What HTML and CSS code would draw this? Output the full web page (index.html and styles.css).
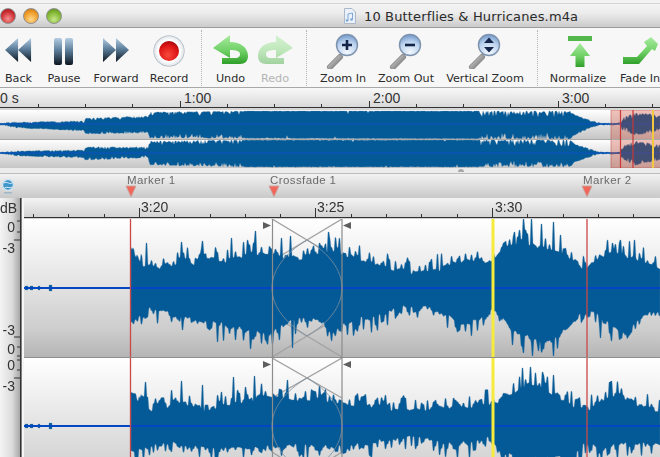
FILE: index.html
```html
<!DOCTYPE html>
<html lang="en">
<head>
<meta charset="utf-8">
<title>10 Butterflies &amp; Hurricanes.m4a</title>
<link rel="stylesheet" href="styles.css">
</head>
<body>
<svg class="defs" width="0" height="0" aria-hidden="true">
  <defs>
    <linearGradient id="steel" x1="0" y1="0" x2="0" y2="1">
      <stop offset="0" stop-color="#b4cde2"/><stop offset=".45" stop-color="#5d7f9c"/><stop offset="1" stop-color="#0c1620"/>
    </linearGradient>
    <linearGradient id="green" x1="0" y1="0" x2="0" y2="1">
      <stop offset="0" stop-color="#a8eba0"/><stop offset=".55" stop-color="#6fd065"/><stop offset="1" stop-color="#2f9f2a"/>
    </linearGradient>
    <linearGradient id="handle" x1="0" y1="0" x2="1" y2="1">
      <stop offset="0" stop-color="#d8d8d8"/><stop offset="1" stop-color="#6a6a6a"/>
    </linearGradient>
    <radialGradient id="lens" cx=".5" cy=".85" r=".85">
      <stop offset="0" stop-color="#f2f7fd"/><stop offset=".6" stop-color="#bcd3ee"/><stop offset="1" stop-color="#6f97cc"/>
    </radialGradient>
    <radialGradient id="red" cx=".45" cy=".7" r=".7">
      <stop offset="0" stop-color="#f84a3c"/><stop offset=".7" stop-color="#dd1414"/><stop offset="1" stop-color="#a40c0c"/>
    </radialGradient>
    <radialGradient id="ring" cx=".5" cy=".5" r=".5">
      <stop offset=".7" stop-color="#ffffff"/><stop offset=".93" stop-color="#e4e8ec"/><stop offset="1" stop-color="#98a4b0"/>
    </radialGradient>
    <symbol id="glass" viewBox="0 0 36 36">
      <path d="M15 24 5 34" class="glass-shadow"/>
      <path d="M15 24 5 34" class="glass-handle"/>
      <circle cx="22" cy="12" r="10.5" class="glass-lens"/>
    </symbol>
  </defs>
</svg>

<div class="app">
  <div class="topstrip"></div>

  <header class="titlebar">
    <div class="lights">
      <span class="light light-red"></span>
      <span class="light light-amber"></span>
      <span class="light light-green"></span>
    </div>
    <div class="title">
      <svg class="doc" viewBox="0 0 12 16" width="12" height="16" aria-hidden="true">
        <path d="M.5.5H8L11.5 4V15.5H.5Z" class="doc-page"/>
        <path d="M4 12.5V6L8.5 5V11.5" class="doc-note"/>
        <circle cx="3" cy="12.5" r="1.3" class="doc-dot"/><circle cx="7.5" cy="11.5" r="1.3" class="doc-dot"/>
      </svg>
      <span>10 Butterflies &amp; Hurricanes.m4a</span>
    </div>
  </header>

  <nav class="toolbar">
    <div class="tool tool-back">
      <svg class="icon" viewBox="0 0 30 28" width="28" height="26" aria-hidden="true"><path d="M0 14 14 1V27ZM14 14 28 1V27Z" class="fill-steel"/></svg>
      <span>Back</span>
    </div>
    <div class="tool tool-pause">
      <svg class="icon" viewBox="0 0 20 28" width="20" height="28" aria-hidden="true"><rect x="0" y="1" width="8" height="27" rx="2" class="fill-steel"/><rect x="11" y="1" width="8" height="27" rx="2" class="fill-steel"/></svg>
      <span>Pause</span>
    </div>
    <div class="tool tool-forward">
      <svg class="icon" viewBox="0 0 30 28" width="28" height="26" aria-hidden="true"><path d="M1 1 15 14 1 27ZM15 1 29 14 15 27Z" class="fill-steel"/></svg>
      <span>Forward</span>
    </div>
    <div class="tool tool-record">
      <svg class="icon" viewBox="0 0 32 32" width="32" height="32" aria-hidden="true"><circle cx="16" cy="16" r="15.5" fill="url(#ring)"/><circle cx="16" cy="16" r="10" fill="url(#red)"/></svg>
      <span>Record</span>
    </div>
    <i class="sep sep-a"></i>
    <div class="tool tool-undo">
      <svg class="icon" viewBox="0 0 35 30" width="35" height="30" aria-hidden="true"><path d="M0 13 17 0V7C28 7 35 13 35 21 35 26 32 29 27 29H9V23H22C26 23 27 21 27 19 27 16 23 15 17 15V23Z" fill="url(#green)"/></svg>
      <span>Undo</span>
    </div>
    <div class="tool tool-redo">
      <svg class="icon icon-off" viewBox="0 0 35 30" width="35" height="30" aria-hidden="true"><path d="M35 13 18 0V7C7 7 0 13 0 21 0 26 3 29 8 29H26V23H13C9 23 8 21 8 19 8 16 12 15 18 15V23Z" fill="url(#green)"/></svg>
      <span>Redo</span>
    </div>
    <i class="sep sep-b"></i>
    <div class="tool tool-in">
      <svg class="icon" viewBox="0 0 36 36" width="36" height="36" aria-hidden="true"><use href="#glass"/><path d="M22 7V17M17 12H27" class="glyph"/></svg>
      <span>Zoom In</span>
    </div>
    <div class="tool tool-out">
      <svg class="icon" viewBox="0 0 36 36" width="36" height="36" aria-hidden="true"><use href="#glass"/><path d="M17 12H27" class="glyph"/></svg>
      <span>Zoom Out</span>
    </div>
    <div class="tool tool-vert">
      <svg class="icon" viewBox="0 0 36 36" width="36" height="36" aria-hidden="true"><use href="#glass"/><path d="M22 4.5 27 10H17ZM22 19.5 17 14H27Z" class="glyph-fill"/></svg>
      <span>Vertical Zoom</span>
    </div>
    <i class="sep sep-c"></i>
    <div class="tool tool-norm">
      <svg class="icon" viewBox="0 0 24 32" width="24" height="32" aria-hidden="true"><rect x="0" y="0" width="24" height="5" fill="#53b84c"/><path d="M12 7 22 20H16.5V31H7.5V20H2Z" fill="url(#green)"/></svg>
      <span>Normalize</span>
    </div>
    <div class="tool tool-fade">
      <svg class="icon" viewBox="0 0 36 28" width="36" height="28" aria-hidden="true"><path d="M0 20H14L24 9 21 5 28 0 35 7 32 14 29 12 16 27H0Z" fill="url(#green)"/></svg>
      <span>Fade In</span>
    </div>
  </nav>

  <svg class="ruler ruler-top" viewBox="0 88 660 22">
    <path class="ruler-line" id="topTicks" d=""/>
    <text class="ruler-text" x="0" y="103">0 s</text>
    <text class="ruler-text" x="184" y="103">1:00</text>
    <text class="ruler-text" x="373" y="103">2:00</text>
    <text class="ruler-text" x="562" y="103">3:00</text>
  </svg>

  <section class="overview">
    <svg class="wave-svg" id="overview" viewBox="0 110 660 58" preserveAspectRatio="none"></svg>
  </section>

  <div class="grip-strip"><i class="grip"></i></div>

  <svg class="markers" viewBox="0 174 660 24">
    <g class="globe">
      <circle cx="8" cy="185" r="5.5" class="globe-ball"/>
      <path d="M4 183C7 181 10 185 12 183M4.5 188C7 186 10 189 12 187" class="globe-line"/>
      <rect x="4" y="192" width="8" height="1.5" class="globe-base"/>
    </g>
    <text class="marker-text" x="127" y="184">Marker 1</text>
    <path class="marker-tri" d="M126 186H136L131 197Z"/>
    <text class="marker-text" x="270" y="184">Crossfade 1</text>
    <path class="marker-tri" d="M269 186H279L274 197Z"/>
    <text class="marker-text" x="583" y="184">Marker 2</text>
    <path class="marker-tri" d="M582 186H592L587 197Z"/>
  </svg>

  <main class="editor">
    <svg class="scale" viewBox="0 198 24 259">
      <text class="scale-text" x="17" y="213">dB</text>
      <text class="scale-text" x="15" y="232">0</text>
      <text class="scale-text" x="15" y="253">-3</text>
      <text class="scale-text" x="15" y="335">-3</text>
      <text class="scale-text" x="15" y="354">0</text>
      <text class="scale-text" x="15" y="370">0</text>
      <text class="scale-text" x="15" y="391">-3</text>
      <path class="scale-ticks" d="M17 221H20M17 232H20M14 240H20M14 337H20M17 347H20M17 356H20M17 360H20M17 370H20M14 378H20"/>
      <rect class="scale-rule" x="20" y="198" width="1.6" height="259"/>
    </svg>
    <div class="timeline">
      <svg class="ruler ruler-main" viewBox="24 198 636 21">
        <path class="ruler-line" id="mainTicks" d=""/>
        <text class="ruler-text" x="141" y="211.5">3:20</text>
        <text class="ruler-text" x="317" y="211.5">3:25</text>
        <text class="ruler-text" x="495" y="211.5">3:30</text>
      </svg>
      <div class="track track-one">
        <svg class="wave-svg" id="trackOne" viewBox="24 219 636 138"></svg>
      </div>
      <div class="track track-two">
        <svg class="wave-svg" id="trackTwo" viewBox="24 358 636 99"></svg>
      </div>
    </div>
  </main>
</div>
<script src="app.js"></script>
</body>
</html>
```
FILE: styles.css
```css
* { box-sizing: border-box; }
html, body { margin: 0; padding: 0; }
body {
  width: 660px;
  height: 457px;
  overflow: hidden;
  background: #eee;
  font-family: "DejaVu Sans", "Noto Sans", sans-serif;
  color: #222;
}
.defs { position: absolute; }
.app {
  display: flex;
  flex-direction: column;
  width: 660px;
  height: 457px;
  overflow: hidden;
  filter: blur(0.35px);
}
.topstrip { height: 4px; background: #f3f3f3; border-bottom: 1px solid #d4d4d4; }

.titlebar {
  display: flex;
  align-items: center;
  height: 24px;
  flex: none;
  padding-top: 1px;
  background: linear-gradient(#f4f4f4, #ececec 40%, #cbcbcb);
  border-bottom: 1px solid #9c9c9c;
}
.lights { display: flex; gap: 7px; margin-left: 0; }
.light {
  width: 16px;
  height: 16px;
  border-radius: 50%;
  border: 1px solid #8f8f8f;
}
.light-red { background: radial-gradient(circle at 50% 70%, #f98e8e, #c92b30 60%, #8e1a20); }
.light-amber { background: radial-gradient(circle at 50% 75%, #ffd98a, #ee9a25 60%, #b46e15); }
.light-green { background: radial-gradient(circle at 50% 75%, #c6e68c, #7fb52f 60%, #557f1d); }
.title {
  display: flex;
  align-items: center;
  gap: 8px;
  margin-left: 282px;
  font-size: 13px;
  letter-spacing: 0.15px;
  color: #2a2a2a;
  white-space: nowrap;
}
.doc-page { fill: #eaf1fa; stroke: #aab8c8; }
.doc-note { fill: none; stroke: #7fa8d4; stroke-width: 1; }
.doc-dot { fill: #7fa8d4; }

.toolbar {
  display: flex;
  flex: none;
  height: 60px;
  background: #f7f7f7;
  border-bottom: 1px solid #a8a8a8;
  padding-left: 5px;
  overflow: hidden;
}
.tool {
  display: flex;
  flex: none;
  flex-direction: column;
  align-items: center;
  justify-content: flex-end;
  font-size: 11.2px;
  line-height: 16px;
  color: #2b2b2b;
  white-space: nowrap;
}
.icon { margin-bottom: 2px; overflow: visible; flex: none; }
.icon-off { opacity: 0.42; }
.tool-back { width: 27px; margin-right: 15px; }
.tool-pause { width: 34px; margin-right: 12px; }
.tool-forward { width: 46px; margin-right: 10px; }
.tool-record { width: 40px; margin-right: 12px; }
.tool-undo { width: 31px; margin-right: 15px; }
.tool-redo { width: 28px; color: #b5b5b5; margin-right: 17px; }
.tool-in { width: 46px; margin-right: 12px; }
.tool-out { width: 56px; margin-right: 12px; }
.tool-vert { width: 78px; margin-right: 13px; }
.tool-norm { width: 58px; margin-right: 11px; }
.tool-fade { width: 44px; }
.tool-back .icon, .tool-forward .icon { margin-bottom: 8px; }
.tool-pause .icon { margin-bottom: 6px; }
.tool-record .icon { margin-bottom: 4px; }
.tool-undo .icon, .tool-redo .icon { margin-bottom: 6px; }
.tool-in .icon, .tool-out .icon, .tool-vert .icon { margin-bottom: 2px; }
.tool-norm .icon { margin-bottom: 3px; margin-left: 4px; }
.tool-fade .icon { margin-bottom: 6px; margin-left: 2px; }
.fill-steel { fill: url(#steel); }
.glass-shadow { stroke: #8d8d8d; stroke-width: 6; stroke-linecap: round; fill: none; }
.glass-handle { stroke: url(#handle); stroke-width: 4; stroke-linecap: round; fill: none; }
.glass-lens { fill: url(#lens); stroke: #7d93ad; stroke-width: 1.4; }
.glyph { stroke: #13264a; stroke-width: 2.6; fill: none; }
.glyph-fill { fill: #13264a; }

.sep {
  flex: none;
  width: 1px;
  height: 56px;
  margin-top: 2px;
  border-left: 1px dotted #b4b4b4;
}
.sep-a { margin-right: 13px; }
.sep-b { margin-right: 13px; }
.sep-c { margin-right: 11px; }

.ruler { display: block; flex: none; }
.ruler-top {
  width: 660px;
  height: 22px;
  background: linear-gradient(#f8f8f8, #d4d4d4);
}
.ruler-main {
  width: 636px;
  height: 21px;
  background: linear-gradient(#f4f4f4, #cfcfcf);
}
.ruler-line { fill: none; stroke: #333; stroke-width: 1; }
.ruler-text { font-family: "Liberation Sans", Arial, sans-serif; font-size: 14px; fill: #333; }

.overview {
  flex: none;
  height: 58px;
  background:
    linear-gradient(#ffffff, #c6c6c6) 0 0 / 100% 29px no-repeat,
    linear-gradient(#ffffff, #c6c6c6) 0 29px / 100% 29px no-repeat;
}
.wave-svg { display: block; width: 100%; height: 100%; }
.grip-strip {
  position: relative;
  flex: none;
  height: 6px;
  background: #ececec;
  border-bottom: 1px solid #bdbdbd;
}
.grip {
  position: absolute;
  left: 458px;
  top: 1px;
  width: 6px;
  height: 3px;
  border-radius: 3px 3px 0 0;
  background: #a8a8a8;
}
.markers {
  display: block;
  flex: none;
  width: 660px;
  height: 24px;
  background: linear-gradient(#f2f2f2, #c9c9c9);
}
.marker-text { font-family: "Liberation Sans", Arial, sans-serif; font-size: 11.5px; letter-spacing: 0.4px; fill: #6a6a6a; }
.marker-tri { fill: #f1665a; stroke: #c9a8a4; stroke-width: 1; }
.globe-ball { fill: #3d95c9; stroke: #cfe2ee; stroke-width: 1.5; }
.globe-line { fill: none; stroke: #dff0f8; stroke-width: 1; }
.globe-base { fill: #9fb7c6; }

.editor { display: flex; flex: 1; min-height: 0; }
.scale {
  display: block;
  flex: none;
  width: 24px;
  height: 259px;
  background: linear-gradient(90deg, #f4f4f4 0, #dcdcdc 12px, #a8a8a8 20px, #f6f6f6 21px, #f6f6f6 24px);
}
.scale-text { font-family: "Liberation Sans", Arial, sans-serif; font-size: 14px; text-anchor: end; fill: #333; }
.scale-ticks { fill: none; stroke: #333; stroke-width: 1; }
.scale-rule { fill: #333; }
.timeline { display: flex; flex: 1; flex-direction: column; min-width: 0; }
.track { flex: none; }
.track-one {
  height: 139px;
  background: linear-gradient(#ffffff, #e2e2e2 50%, #cdcdcd 80%, #b5b5b5);
  border-bottom: 1px solid #8e8e8e;
}
.track-two {
  height: 99px;
  background: linear-gradient(#ffffff, #e2e2e2 70%, #d6d6d6);
}
.wave { fill: #045a96; stroke: #5c8bb0; stroke-width: 0.3; }
.center { fill: none; stroke: #0346c4; stroke-width: 2; }
.overview .center { stroke: #0a54b8; stroke-width: 1.4; }
.xline { fill: none; stroke: #a3a3a3; stroke-width: 1.4; }
.arc { fill: none; stroke: #7d8f9f; stroke-width: 1; opacity: 0.8; }
.edge { fill: none; stroke: #8c8c8c; stroke-width: 1.2; }
.handle { fill: #5e5e5e; }
.mark-red { fill: none; stroke: #c94848; stroke-width: 1.3; }
.mark-yellow { fill: none; stroke: #f6ea3c; stroke-width: 3; }
.ov-sel { fill: rgba(205, 55, 35, 0.3); stroke: rgba(190, 70, 60, 0.5); stroke-width: 1; }
.ov-div { fill: none; stroke: #a8a8a8; stroke-width: 1; }
.ov-red { fill: none; stroke: #c93838; stroke-width: 1.2; }
.ov-yellow { fill: none; stroke: #f2c93e; stroke-width: 2; }
```
FILE: app.js
```js
(function () {
  var NS = 'http://www.w3.org/2000/svg';
  var seed = 12345;
  function rnd() { seed = (seed * 1664525 + 1013904223) % 4294967296; return seed / 4294967296; }
  function lerp(env, x) {
    if (x <= env[0][0]) return env[0][1];
    for (var i = 1; i < env.length; i++) {
      if (x <= env[i][0]) {
        var a = env[i - 1], b = env[i];
        return a[1] + (b[1] - a[1]) * (x - a[0]) / (b[0] - a[0]);
      }
    }
    return env[env.length - 1][1];
  }
  function add(svg, tag, attrs) {
    var el = document.createElementNS(NS, tag);
    for (var k in attrs) el.setAttribute(k, attrs[k]);
    svg.appendChild(el);
    return el;
  }
  function wavePath(o) {
    var top = [], bot = [], x, step = o.step || 1, rt = 0, rb = 0, jt = 0, jb = 0;
    for (x = o.x0; x <= o.x1; x++) {
      if ((x - o.x0) % step === 0) {
        rt = rnd(); rb = rnd(); jt = rnd() - .5; jb = rnd() - .5;
      }
      var amp = o.amp(x);
      var t = lerp(o.top, x) - o.dir * amp * rt * rt * rt + jt * o.jit;
      var b = lerp(o.bot, x) + o.dir * amp * rb * rb * rb + jb * o.jit;
      if (o.peaksTop && (o.peaksTop[x] || o.peaksTop[x - 1])) t = o.peaksTop[x] || o.peaksTop[x - 1];
      if (o.peaksBot && (o.peaksBot[x] || o.peaksBot[x - 1])) b = o.peaksBot[x] || o.peaksBot[x - 1];
      top.push(Math.max(o.minY, t).toFixed(1));
      bot.push(Math.min(o.maxY, b).toFixed(1));
    }
    var d = 'M' + o.x0 + ' ' + top[0];
    for (x = 1; x < top.length; x++) d += 'L' + (o.x0 + x) + ' ' + top[x];
    for (x = bot.length - 1; x >= 0; x--) d += 'L' + (o.x0 + x) + ' ' + bot[x];
    return d + 'Z';
  }

  /* ---- rulers ---- */
  var t = 'M0 107.5H660', i, px;
  for (i = 0; i < 16; i++) {
    px = Math.round(-9.5 + 47.25 * i) + .5;
    t += 'M' + px + ' 107V' + (i % 4 === 0 ? 101 : 104);
  }
  document.getElementById('topTicks').setAttribute('d', t);
  t = 'M24 217.5H660';
  for (i = 0; i < 19; i++) {
    px = Math.round(33 + 35.3 * i) + .5;
    t += 'M' + px + ' 217V' + ((i - 3) % 5 === 0 ? 208 : 214);
  }
  document.getElementById('mainTicks').setAttribute('d', t);

  /* ---- overview ---- */
  var ov = document.getElementById('overview');
  function ovAmp(x) {
    if (x < 84) return 1.6;
    if (x < 150) return 2.5;
    if (x < 245) return 4;
    if (x < 480) return rnd() > .93 ? 2.5 : .2;
    if (x < 570) return 6;
    if (x < 610) return 1.5;
    return 4;
  }
  var ovT1 = [[0,123],[15,122],[84,121],[85,118],[148,116],[150,112],[250,111],[570,111],[575,115],[590,120],[600,123],[620,123.2],[622,118],[635,113],[650,114],[660,116]];
  var ovB1 = [[0,125],[17,128],[84,131],[85,134],[148,133],[150,138],[570,139],[575,135],[590,128],[600,125],[620,125],[622,130],[635,135],[645,134],[660,131]];
  var ovT2 = [[0,152],[17,151],[84,150],[85,147],[148,147],[150,141],[240,140],[570,140],[575,144],[590,149],[600,152],[620,152.2],[622,146],[635,141],[650,143],[660,145]];
  var ovB2 = [[0,154],[17,156],[84,158],[85,160],[148,158],[150,165],[240,167],[570,167],[575,162],[590,157],[600,154],[620,154],[622,159],[635,165],[645,163],[660,160]];
  function ovWave(topE, botE, minY, maxY) {
    return wavePath({ x0: 0, x1: 660, top: topE, bot: botE, amp: ovAmp, dir: -1, jit: .5, minY: minY, maxY: maxY });
  }
  add(ov, 'path', { 'class': 'wave', d: ovWave(ovT1, ovB1, 111, 139) });
  add(ov, 'path', { 'class': 'wave', d: ovWave(ovT2, ovB2, 140, 168) });
  add(ov, 'path', { 'class': 'center', d: 'M0 124H660M0 153H660' });
  add(ov, 'path', { 'class': 'ov-div', d: 'M0 139.5H660' });
  add(ov, 'rect', { 'class': 'ov-sel', x: 611, y: 110, width: 60, height: 58 });
  add(ov, 'path', { 'class': 'ov-div', d: 'M611 139.5H660' });
  add(ov, 'path', { 'class': 'ov-red', d: 'M620.5 110V168M633 110V168' });
  add(ov, 'path', { 'class': 'ov-yellow', d: 'M653 110V168' });

  /* ---- main tracks ---- */
  function trAmp() { return 15; }
  var T1 = [[131,246],[134,252],[143,268],[160,268],[175,264],[185,260],[197,267],[210,258],[225,261],[240,257],[255,253],[272,255],[290,258],[307,258],[330,250],[345,256],[355,258],[378,266],[400,272],[420,273],[440,269],[460,262],[475,260],[490,262],[500,254],[510,247],[525,242],[540,247],[555,252],[575,260],[585,270],[600,256],[615,252],[630,257],[650,265],[660,268]];
  var B1 = [[131,320],[140,316],[150,309],[160,308],[175,317],[195,320],[210,323],[225,325],[240,329],[255,331],[270,334],[280,328],[290,320],[305,318],[320,321],[335,333],[345,322],[355,320],[375,316],[395,310],[410,304],[430,308],[445,314],[455,320],[470,324],[485,309],[500,314],[510,326],[520,332],[535,340],[548,343],[560,334],[575,320],[587,306],[600,318],[615,328],[625,334],[640,318],[660,308]];
  var T2 = [[131,392],[135,396],[145,410],[170,407],[180,402],[190,405],[200,410],[215,407],[240,402],[265,397],[290,399],[330,400],[350,404],[370,407],[413,412],[445,407],[470,407],[490,404],[505,400],[520,390],[530,384],[545,390],[560,397],[575,408],[590,409],[605,400],[615,394],[625,399],[640,406],[660,412]];
  var B2 = [[131,452],[152,446],[175,443],[200,448],[250,448],[300,445],[345,448],[385,440],[413,436],[440,443],[470,443],[490,435],[500,453],[520,458],[570,458],[587,441],[600,450],[620,443],[660,443]];
  var P1 = {146:243,181:242,202:241,231:238,255:231,281:238,290:236,319:243,328:232,514:232,523:219,531:219,541:224,553:222,560:235,612:243,620:240,634:240};
  var PB1 = {182:330,217:342,235:340,250:349,272:344,292:348,512:345,523:353,532:356,538:351,553:356,600:338,611:341};
  var P2 = {145:382,181:381,202:385,233:377,254:376,287:380,522:368,530:367,542:372,553:375,609:382,611:381};

  function blips(y) {
    return 'M25 ' + (y - 2) + 'H28V' + (y + 2) + 'H25ZM30 ' + (y - 2) + 'H33V' + (y + 2) + 'H30ZM38 ' + (y - 2) + 'H40V' + (y + 2) + 'H38ZM49 ' + (y - 3) + 'H52V' + (y + 3) + 'H49Z';
  }
  function buildTrack(svg, o) {
    var top = o.y, mid = o.mid, c = mid - 48, low = 2 * c - top;
    var bc = mid + 48, bot = top + 138;
    add(svg, 'path', { 'class': 'xline', d: 'M272 ' + top + 'L342 ' + low + 'M342 ' + top + 'L272 ' + low + 'M272 ' + bot + 'L342 ' + (2 * bc - bot) + 'M342 ' + bot + 'L272 ' + (2 * bc - bot) });
    add(svg, 'path', { 'class': 'wave', d: wavePath({ x0: 131, x1: 660, top: o.T, bot: o.B, amp: trAmp, dir: 1, jit: 4, step: 2, minY: top, maxY: top + 139, peaksTop: o.P, peaksBot: o.PB }) });
    add(svg, 'path', { 'class': 'wave', d: blips(mid) });
    add(svg, 'path', { 'class': 'center', d: 'M24 ' + mid + 'H660' });
    add(svg, 'path', { 'class': 'arc', d: 'M307 ' + c + 'C285 ' + (mid - 35) + ' 272 ' + (mid - 18) + ' 272 ' + mid + 'C272 ' + (mid + 18) + ' 285 ' + (mid + 35) + ' 307 ' + bc + 'C329 ' + (mid + 35) + ' 342 ' + (mid + 18) + ' 342 ' + mid + 'C342 ' + (mid - 18) + ' 329 ' + (mid - 35) + ' 307 ' + c + 'Z' });
    add(svg, 'path', { 'class': 'edge', d: 'M272.5 ' + top + 'V' + (top + 140) + 'M342 ' + top + 'V' + (top + 140) });
    add(svg, 'path', { 'class': 'handle', d: 'M263 ' + (top + 3) + 'L271 ' + (top + 6.5) + 'L263 ' + (top + 10) + 'Z' });
    add(svg, 'path', { 'class': 'handle', d: 'M351 ' + (top + 3) + 'L343 ' + (top + 6.5) + 'L351 ' + (top + 10) + 'Z' });
    add(svg, 'path', { 'class': 'mark-red', d: 'M130.5 ' + top + 'V' + (top + 140) + 'M587 ' + top + 'V' + (top + 140) });
    add(svg, 'path', { 'class': 'mark-yellow', d: 'M493 ' + top + 'V' + (top + 140) });
  }
  buildTrack(document.getElementById('trackOne'), { y: 219, mid: 288, T: T1, B: B1, P: P1, PB: PB1 });
  buildTrack(document.getElementById('trackTwo'), { y: 358, mid: 426, T: T2, B: B2, P: P2, PB: {} });
})();
```
